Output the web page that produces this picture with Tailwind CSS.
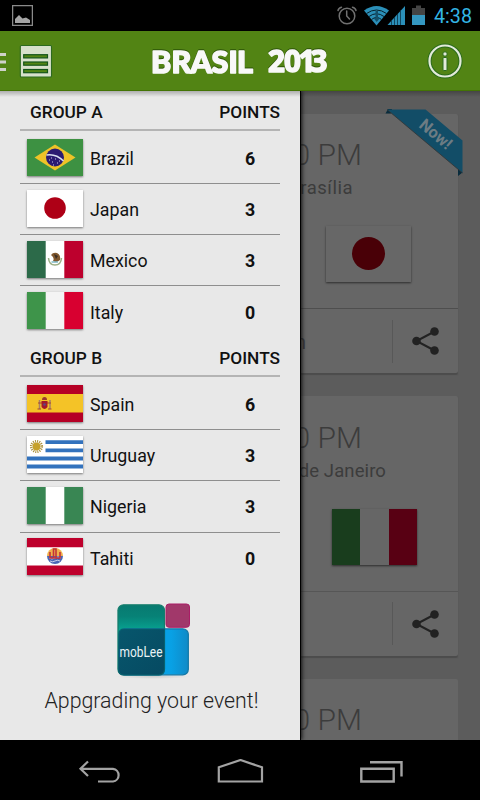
<!DOCTYPE html>
<html lang="en">
<head>
<meta charset="utf-8">
<title>Brasil 2013</title>
<script src="https://cdn.jsdelivr.net/npm/@tailwindcss/browser@4"></script>
</head>
<body class="bg-black">
<div class="w-[480px] h-[800px] flex flex-col overflow-hidden bg-black font-[Roboto,sans-serif]">

  <!-- status bar -->
  <header class="h-[31px] shrink-0 flex items-center justify-between pl-3 pr-[7px]">
    <svg class="w-[21px] h-[21px]" viewBox="0 0 21 21"><rect x=".6" y=".6" width="19.8" height="19.8" fill="none" stroke="#8a8a8a" stroke-width="1.3"/><path d="M3 18V14L7 10L10.5 13.5L14 12.5L18 15V18Z" fill="#a5a5a5"/></svg>
    <div class="flex items-center">
      <svg class="w-[98px] h-[31px]" viewBox="335 0 98 31">
        <g fill="none" stroke="#707070" stroke-width="1.5" stroke-linecap="round"><circle cx="347" cy="16" r="7.8"/><path d="M346.7 11V16L349.5 19M338 10.500Q338.500 8 341.500 7.200M356 10.500Q355.500 8 352.500 7.200"/></g>
        <path d="M364 10.500Q376.500 1.500 389 10.500L376.500 25.500Z" fill="#2b8fb8"/>
        <g fill="none" stroke="#06202b" stroke-width="1"><path d="M366.500 13.500Q376.500 6.500 386.500 13.500M369 16.500Q376.500 11 384 16.500M371.500 19.500Q376.500 15.500 381.500 19.500"/></g>
        <path d="M375.500 11H378V18H380L376.700 22L373.500 18H375.500Z" fill="#14506a"/>
        <path d="M387.500 25L405 6V25Z" fill="#2b8fb8"/>
        <path d="M391.500 20V25M394.500 17V25M397.500 14V25M400.500 10V25" stroke="#0b3446" stroke-width=".8"/>
        <path d="M412 8H416V5.500H421V8H425V15H412Z" fill="#444"/><path d="M412 15H425V25H412Z" fill="#3497c0"/>
      </svg>
      <svg class="w-[40px] h-[31px]" viewBox="433 0 40 31"><text x="434" y="23" font-size="20.500" textLength="38" lengthAdjust="spacingAndGlyphs" fill="#33b5e5" font-family="Roboto, sans-serif">4:38</text></svg>
    </div>
  </header>

  <!-- action bar -->
  <div class="h-[60px] shrink-0 bg-[#528414] border-b border-[#437404] flex items-center justify-between pr-[17px]">
    <svg class="w-[54px] h-[60px]" viewBox="0 0 54 60">
      <path d="M0 23.500H6M0 31H6M0 38.500H6" stroke="#cfd2ca" stroke-width="3"/>
      <rect x="20.300" y="14.500" width="31.200" height="31.500" rx="1" fill="#d7e0cb" stroke="#2c6a1f" stroke-width="1.100"/>
      <g fill="#528414" stroke="#14551a" stroke-width="1.200"><rect x="23.700" y="23.700" width="23.800" height="3.200"/><rect x="23.700" y="31" width="23.800" height="3.200"/><rect x="23.700" y="38.500" width="23.800" height="3.200"/></g>
    </svg>
    <svg class="w-[190px] h-[60px] ml-[1px]" viewBox="146 31 190 60">
      <g font-weight="900" fill="#f8f8f8" stroke="#f8f8f8" stroke-width="1.600" stroke-linejoin="round" class="[filter:drop-shadow(0_-1px_0_#2d5507)]">
        <text x="151 171.500 190.500 211.500 228.500 237" y="72.500" font-size="30.500" font-family="Lato, sans-serif">BRASIL</text>
        <text x="268 284 298.500 310.500" y="72" font-size="29.500" font-family="'Open Sans', sans-serif" style="font-weight:700">2013</text>
      </g>
    </svg>
    <svg class="w-[36px] h-[36px]" viewBox="0 0 36 36">
      <circle cx="18" cy="18" r="15.500" fill="none" stroke="#2b6b1c" stroke-width="4.200"/>
      <circle cx="18" cy="18" r="15.500" fill="none" stroke="#e3ead9" stroke-width="2.200"/>
      <g fill="#e3ead9" stroke="#2b6b1c" stroke-width="1"><circle cx="18" cy="11" r="2.200"/><rect x="16" y="14.500" width="4" height="13" rx="1"/></g>
    </svg>
  </div>

  <!-- content -->
  <div class="relative h-[649px] shrink-0 overflow-hidden bg-[#5c5c5c]">
    <main class="flex flex-col gap-[23px] pt-[22.500px] pl-[22px] pr-[22px] text-[#3c3c3c]">
      <section class="relative h-[259.500px] shrink-0 flex flex-col rounded-[2px] bg-[#666] shadow-[0_1.500px_1px_#4c4c4c]">
        <div class="h-[195.500px] flex flex-col items-end border-b border-[#4e4e4e]">
          <div class="mt-[23.500px] mr-[96px] h-[36px] text-[30px] leading-[36px] font-light">0 PM</div>
          <div class="mt-[4px] mr-[105px] h-[22px] text-[18.500px] leading-[22px] tracking-[.5px]">rasília</div>
          <div class="mt-[26.500px] mr-[47px] w-[85px] h-[56px] bg-[#676767] shadow-[0_1px_2px_#2c2c2c] flex items-center justify-center"><div class="size-[33px] rounded-full bg-[#490007]"></div></div>
        </div>
        <div class="flex-1 flex items-center justify-end">
          <span class="text-[20px] mr-[86px] pt-[2px]">n</span>
          <div class="h-[43px] w-[66px] border-l border-[#585858] flex items-center pl-[19px]">
            <svg class="w-[27px] h-[28px]" viewBox="0 0 27 28"><path d="M22.500 4.500L4.500 14L22.500 23.500" fill="none" stroke="#222" stroke-width="2"/><g fill="#222"><circle cx="4.500" cy="14" r="4.300"/><circle cx="22.500" cy="4.500" r="4.300"/><circle cx="22.500" cy="23.500" r="4.300"/></g></svg>
          </div>
        </div>
        <svg class="absolute right-[-6px] top-[-6px] w-[80px] h-[70px]" viewBox="384 108 80 70">
          <path d="M385.500 113.500L388 109H392L391 113.500ZM458 168L462.500 172.500L458 176Z" fill="#092c3d"/>
          <path d="M387 109.500H425.500L462.500 140.500V173Z" fill="#124d67"/><path d="M387 109.500L462.500 173" stroke="#333" stroke-width=".8"/>
          <text x="418" y="126.500" transform="rotate(40 418 126.500)" font-family="Roboto, sans-serif" font-size="16.500" font-weight="700" textLength="37" lengthAdjust="spacingAndGlyphs" fill="#6d7c83">Now!</text>
        </svg>
      </section>
      <section class="h-[259.500px] shrink-0 flex flex-col rounded-[2px] bg-[#666] shadow-[0_1.500px_1px_#4c4c4c]">
        <div class="h-[195.500px] flex flex-col items-end border-b border-[#565656]">
          <div class="mt-[23.500px] mr-[96px] h-[36px] text-[30px] leading-[36px] font-light">0 PM</div>
          <div class="mt-[4px] mr-[72px] h-[22px] text-[18.500px] leading-[22px] tracking-[.1px]">de Janeiro</div>
          <div class="mt-[27px] mr-[41px] w-[85px] h-[56px] shadow-[0_1px_2px_#2c2c2c] grid grid-cols-3"><i class="bg-[#193d1d]"></i><i class="bg-[#666]"></i><i class="bg-[#580013]"></i></div>
        </div>
        <div class="flex-1 flex items-center justify-end">
          <div class="h-[43px] w-[66px] border-l border-[#585858] flex items-center pl-[19px]">
            <svg class="w-[27px] h-[28px]" viewBox="0 0 27 28"><path d="M22.500 4.500L4.500 14L22.500 23.500" fill="none" stroke="#222" stroke-width="2"/><g fill="#222"><circle cx="4.500" cy="14" r="4.300"/><circle cx="22.500" cy="4.500" r="4.300"/><circle cx="22.500" cy="23.500" r="4.300"/></g></svg>
          </div>
        </div>
      </section>
      <section class="h-[259.500px] shrink-0 flex flex-col items-end rounded-[2px] bg-[#666]">
        <div class="mt-[23.500px] mr-[96px] h-[36px] text-[30px] leading-[36px] font-light">0 PM</div>
      </section>
    </main>

    <!-- drawer -->
    <aside class="absolute left-0 top-0 w-[300px] h-full bg-[#e8e8e8] px-5 flex flex-col text-[#111] shadow-[1px_0_0_#000,2px_0_4px_#111]">
      <div class="h-[40px] shrink-0 pl-[10px] pb-[7px] flex items-end justify-between border-b-2 border-[#b4b4b4] text-[17.300px] leading-[20px] font-medium"><h2>GROUP A</h2><span>POINTS</span></div>
      <ul class="flex flex-col pt-[1.500px] text-[17.800px]">
        <li class="h-[51.300px] flex items-center pl-[7px] border-b-[1.500px] border-[#8e8e8e]">
          <svg class="w-[56px] h-[37px] mb-[1px] shadow-[0_1px_2px_#777]" viewBox="0 0 56 37"><path fill="#3d9142" d="M0 0H56V37H0Z"/><path fill="#efc328" d="M7.500 18.500L28 5.500L48.500 18.500L28 31.500Z"/><circle cx="28" cy="18.500" r="9" fill="#2b1b72"/><path d="M19.500 16Q29 14.500 36.500 22" fill="none" stroke="#d8dff0" stroke-width="1.500"/><path d="M22 21h1M25 23h1M28 20h1M30 24h1M26 26h1M32 22h1M24 19h1" stroke="#c8c8e8" stroke-width="1"/></svg>
          <span class="flex-1 pl-[7px] pt-[3px]">Brazil</span><b class="w-[60px] pt-[3px] text-center">6</b></li>
        <li class="h-[51.300px] flex items-center pl-[7px] border-b-[1.500px] border-[#8e8e8e]">
          <svg class="w-[56px] h-[37px] mb-[1px] shadow-[0_1px_2px_#777]" viewBox="0 0 56 37"><path fill="#fff" d="M0 0H56V37H0Z"/><circle cx="28" cy="18" r="10.800" fill="#ae0016"/></svg>
          <span class="flex-1 pl-[7px] pt-[3px]">Japan</span><b class="w-[60px] pt-[3px] text-center">3</b></li>
        <li class="h-[51.300px] flex items-center pl-[7px] border-b-[1.500px] border-[#8e8e8e]">
          <svg class="w-[56px] h-[37px] mb-[2px] shadow-[0_1px_2px_#777]" viewBox="0 0 56 37"><path fill="#fff" d="M0 0H56V37H0Z"/><path fill="#2c6a49" d="M0 0H18.700V37H0Z"/><path fill="#bd002d" d="M37.300 0H56V37H37.300Z"/><path d="M21.500 17Q22 24 28 24Q34 24 34.500 17" fill="none" stroke="#9cae85" stroke-width="1.500"/><path d="M24 14Q26 11 30 12Q34 14 33 19Q30 22 26 20Q28 17 24 14Z" fill="#80582f"/><path d="M27 13L31 15L29 18Z" fill="#392d24"/><path d="M24.500 21H31" stroke="#6aaebf" stroke-width="1.300"/></svg>
          <span class="flex-1 pl-[7px] pt-[3px]">Mexico</span><b class="w-[60px] pt-[3px] text-center">3</b></li>
        <li class="h-[51.300px] flex items-center pl-[7px]">
          <svg class="w-[56px] h-[37px] mb-[4px] shadow-[0_1px_2px_#777]" viewBox="0 0 56 37"><path fill="#f4f4f4" d="M0 0H56V37H0Z"/><path fill="#3e944a" d="M0 0H18.700V37H0Z"/><path fill="#d80030" d="M37.300 0H56V37H37.300Z"/></svg>
          <span class="flex-1 pl-[7px] pt-[2px]">Italy</span><b class="w-[60px] pt-[2px] text-center">0</b></li>
      </ul>
      <div class="h-[39.500px] shrink-0 pl-[10px] pb-[7px] flex items-end justify-between border-b-2 border-[#b4b4b4] text-[17.300px] leading-[20px] font-medium"><h2>GROUP B</h2><span>POINTS</span></div>
      <ul class="flex flex-col pt-[1.500px] text-[17.800px]">
        <li class="h-[51.300px] flex items-center pl-[7px] border-b-[1.500px] border-[#8e8e8e]">
          <svg class="w-[56px] h-[37px] mb-[1px] shadow-[0_1px_2px_#777]" viewBox="0 0 56 37"><path fill="#b50025" d="M0 0H56V37H0Z"/><path fill="#f4c327" d="M0 9H56V27.500H0Z"/><path d="M12.500 15V24M23 15V24" stroke="#a68068" stroke-width="1.500"/><path d="M11 18H24M10.500 24H14M21 24H24.500" stroke="#a34435" stroke-width="1.200"/><path d="M14.500 16H20.500V22Q17.500 26 14.500 22Z" fill="#a51a2b"/><path d="M15 15Q15 12 17.500 12Q20 12 20 15Z" fill="#9b3a2f"/><circle cx="17.500" cy="19.500" r="1.300" fill="#5b4a83"/></svg>
          <span class="flex-1 pl-[7px] pt-[3px]">Spain</span><b class="w-[60px] pt-[3px] text-center">6</b></li>
        <li class="h-[51.300px] flex items-center pl-[7px] border-b-[1.500px] border-[#8e8e8e]">
          <svg class="w-[56px] h-[37px] mb-[2px] shadow-[0_1px_2px_#777]" viewBox="0 0 56 37"><path fill="#fff" d="M0 0H56V37H0Z"/><path d="M18.500 6.200H56M18.500 14.300H56M0 22.500H56M0 30.500H56" stroke="#3272bd" stroke-width="3.800"/><circle cx="9.500" cy="10.500" r="5.300" fill="none" stroke="#a98f3c" stroke-width="2.600" stroke-dasharray="1 1.080"/><circle cx="9.500" cy="10.500" r="3.900" fill="#c6a12c"/></svg>
          <span class="flex-1 pl-[7px] pt-[3px]">Uruguay</span><b class="w-[60px] pt-[3px] text-center">3</b></li>
        <li class="h-[51.300px] flex items-center pl-[7px] border-b-[1.500px] border-[#8e8e8e]">
          <svg class="w-[56px] h-[37px] mb-[2px] shadow-[0_1px_2px_#777]" viewBox="0 0 56 37"><path fill="#fff" d="M0 0H56V37H0Z"/><path fill="#398653" d="M0 0H18.700V37H0ZM37.300 0H56V37H37.300Z"/></svg>
          <span class="flex-1 pl-[7px] pt-[2px]">Nigeria</span><b class="w-[60px] pt-[2px] text-center">3</b></li>
        <li class="h-[51.300px] flex items-center pl-[7px]">
          <svg class="w-[56px] h-[37px] mb-[4px] shadow-[0_1px_2px_#777]" viewBox="0 0 56 37"><path fill="#be002c" d="M0 0H56V37H0Z"/><path fill="#fff" d="M0 9.300H56V27.500H0Z"/><path d="M20 18A8 8 0 0 1 36 18Z" fill="#efb04c"/><path d="M20 18A8 8 0 0 0 36 18Z" fill="#4966b5"/><path d="M22 20Q25 22 28 20T34 20M23 23Q25.500 24.500 28 23T33 23" fill="none" stroke="#e8ecf8" stroke-width=".8"/><path d="M23 14V20H33V14M26.500 20V11H29V20" fill="none" stroke="#c33339" stroke-width="1.600"/></svg>
          <span class="flex-1 pl-[7px] pt-[2px]">Tahiti</span><b class="w-[60px] pt-[2px] text-center">0</b></li>
      </ul>
      <svg class="w-[230px] h-[126px] ml-[18px] mt-[11px] shrink-0" viewBox="38 595 230 126">
        <defs>
          <linearGradient id="teal" x2="0" y2="1"><stop stop-color="#087a70"/><stop offset=".17" stop-color="#078277"/><stop offset=".35" stop-color="#08a08f"/></linearGradient>
          <linearGradient id="blue"><stop offset=".5" stop-color="#08a1e5"/><stop offset=".75" stop-color="#08a1e5"/><stop offset="1" stop-color="#108ac7"/></linearGradient>
          <linearGradient id="navy" x2="1" y2="1"><stop stop-color="#07566c"/><stop offset="1" stop-color="#064a62"/></linearGradient>
          <radialGradient id="glow"><stop stop-color="#cfcfcf"/><stop offset="1" stop-color="#e8e8e8"/></radialGradient>
        </defs>
        <ellipse cx="153" cy="676.500" rx="38" ry="2.500" fill="url(#glow)"/>
        <rect x="118" y="604.800" width="46.500" height="70" rx="5.500" fill="url(#teal)" stroke="#157d6c" stroke-width="1.300"/>
        <rect x="119.500" y="628.800" width="68.800" height="46" rx="5.500" fill="url(#blue)" stroke="#1579a7" stroke-width="1.300"/>
        <path d="M119 634Q119 629 124 629H164.500V669Q164.500 675 158.500 675H124Q118.500 675 118.500 669Z" fill="url(#navy)" stroke="#08606f" stroke-width="1.200"/>
        <rect x="166" y="604" width="23.500" height="23.300" rx="3" fill="#a1386a" stroke="#aa1d66" stroke-width="1"/>
        <text x="119.500" y="657" font-family="Roboto, sans-serif" font-size="14" fill="#eaf4f6" textLength="43" lengthAdjust="spacingAndGlyphs">mobLee</text>
        <text x="44.500" y="708.300" font-family="Roboto, 'Liberation Sans', sans-serif" font-weight="300" font-size="22.500" fill="#222" textLength="214" lengthAdjust="spacingAndGlyphs">Appgrading your event!</text>
      </svg>
    </aside>
    <div class="absolute inset-x-0 top-0 h-[6px] bg-linear-to-b from-black/25 to-transparent"></div>
  </div>

  <!-- navigation bar -->
  <nav class="h-[60px] shrink-0 flex items-center justify-between pt-[4px] pl-[78px] pr-[76px]">
    <svg class="w-[44px] h-[26px]" viewBox="78 759 44 26" fill="none" stroke="#a3a3a3" stroke-width="2.200"><path d="M88 761.500L80.500 768.800L88 776M81 768.800H113A6.400 6.400 0 0 1 113 781.500H98"/></svg>
    <svg class="w-[48px] h-[26px]" viewBox="216.500 759 48 26" fill="none" stroke="#a3a3a3" stroke-width="2.200"><path d="M218.300 781.500V767.300L240 760L261.500 767.300V781.500Z"/></svg>
    <svg class="w-[45px] h-[26px]" viewBox="359 759 45 26" fill="none" stroke="#a3a3a3" stroke-width="2.400"><path d="M361.300 768.700H393.700V781.500H361.300ZM370 762.300H401.500V776.500"/></svg>
  </nav>
</div>
</body>
</html>
